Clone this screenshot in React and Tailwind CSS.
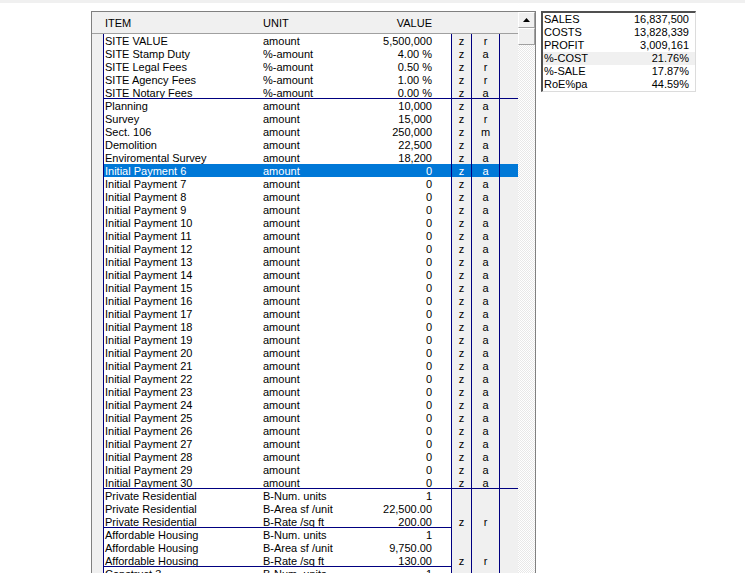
import React from 'react';

const items = [
  ['SITE VALUE', 'amount', '5,500,000', 'z', 'r'],
  ['SITE Stamp Duty', '%-amount', '4.00 %', 'z', 'a'],
  ['SITE Legal Fees', '%-amount', '0.50 %', 'z', 'r'],
  ['SITE Agency Fees', '%-amount', '1.00 %', 'z', 'r'],
  ['SITE Notary Fees', '%-amount', '0.00 %', 'z', 'a', 'full'],
  ['Planning', 'amount', '10,000', 'z', 'a'],
  ['Survey', 'amount', '15,000', 'z', 'r'],
  ['Sect. 106', 'amount', '250,000', 'z', 'm'],
  ['Demolition', 'amount', '22,500', 'z', 'a'],
  ['Enviromental Survey', 'amount', '18,200', 'z', 'a'],
];

for (let i = 6; i <= 30; i++) {
  items.push([`Initial Payment ${i}`, 'amount', '0', 'z', 'a', i === 30 ? 'full' : null, i === 6]);
}

items.push(
  ['Private Residential', 'B-Num. units', '1', '', ''],
  ['Private Residential', 'B-Area sf /unit', '22,500.00', '', ''],
  ['Private Residential', 'B-Rate /sq ft', '200.00', 'z', 'r', 'part'],
  ['Affordable Housing', 'B-Num. units', '1', '', ''],
  ['Affordable Housing', 'B-Area sf /unit', '9,750.00', '', ''],
  ['Affordable Housing', 'B-Rate /sq ft', '130.00', 'z', 'r', 'part'],
  ['Construct 3', 'B-Num. units', '1', '', ''],
  ['Construct 3', 'B-Area sf /unit', '0.00', '', ''],
);

const summary = [
  ['SALES', '16,837,500'],
  ['COSTS', '13,828,339'],
  ['PROFIT', '3,009,161'],
  ['%-COST', '21.76%', true],
  ['%-SALE', '17.87%'],
  ['RoE%pa', '44.59%'],
];

function Row({ item, unit, value, z, r, line, sel }) {
  const part = line === 'part' ? 'border-b border-[#000080]' : '';
  const side = sel ? 'bg-[#0078d7]' : 'bg-[#f0f0f0]';
  return (
    <div className="flex h-[13px]">
      <div className="w-[12px] shrink-0 bg-[#f0f0f0] border-r border-[#000080]" />
      <div className={`flex flex-1 ${line === 'full' ? 'border-b border-[#000080]' : ''} ${sel ? 'bg-[#0078d7] text-white' : 'text-black'}`}>
        <div className={`w-[159px] shrink-0 pl-[1px] pt-[1px] whitespace-nowrap overflow-hidden ${part}`}>{item}</div>
        <div className={`w-[110px] shrink-0 pt-[1px] whitespace-nowrap overflow-hidden ${part}`}>{unit}</div>
        <div className={`w-[78px] shrink-0 pr-[19px] pt-[1px] text-right whitespace-nowrap ${part}`}>{value}</div>
        <div className={`w-[20px] shrink-0 pt-[1px] text-center border-l border-[#000080] ${side}`}>{z}</div>
        <div className={`w-[28px] shrink-0 pt-[1px] text-center border-l border-[#000080] ${side}`}>{r}</div>
        <div className={`w-[19px] shrink-0 border-l border-[#000080] ${side}`} />
      </div>
    </div>
  );
}

export default function App() {
  return (
    <div className="h-[573px] overflow-hidden bg-white text-[11px] leading-[13px] text-black font-['Liberation_Sans',Arial,sans-serif]">
      <div className="h-[3px] bg-[#f0f0f0]" />
      <div className="flex items-start pl-[91px] pt-[8px]">
        {/* grid */}
        <div className="flex w-[445px] shrink-0 border border-b-0 border-[#808080]">
          <div className="flex flex-col w-[426px]">
            <div className="flex h-[22px] items-center pt-[1px] bg-[#f0f0f0] border-b border-[#a0a0a0]">
              <div className="w-[171px] pl-[13px]">ITEM</div>
              <div className="w-[110px]">UNIT</div>
              <div className="w-[78px] pr-[19px] text-right">VALUE</div>
            </div>
            {items.map((it, i) => (
              <Row key={i} item={it[0]} unit={it[1]} value={it[2]} z={it[3]} r={it[4]} line={it[5]} sel={it[6]} />
            ))}
          </div>
          {/* scrollbar */}
          <div className="flex flex-col w-[17px] shrink-0">
            <div className="h-[16px] flex items-center justify-center bg-[#f0f0f0] border-t border-l border-white border-r border-b border-r-[#a0a0a0] border-b-[#a0a0a0]">
              <svg width="7" height="4" viewBox="0 0 7 4">
                <polygon points="3.5,0 7,4 0,4" fill="#000" />
              </svg>
            </div>
            <div className="h-[17px] bg-[#f0f0f0] border-t border-l border-white border-r border-b border-r-[#a0a0a0] border-b-[#a0a0a0]" />
            <div className="flex-1 bg-[image:repeating-conic-gradient(#e8e8e8_0_25%,#ffffff_0_50%)] bg-[length:2px_2px]" />
          </div>
        </div>

        {/* summary */}
        <div className="ml-[5px] w-[155px] shrink-0 border-t-2 border-l-2 border-t-[#505050] border-l-[#505050] border-r border-b border-r-[#dcdcdc] border-b-[#dcdcdc] bg-white">
          {summary.map(([k, v, hl]) => (
            <div key={k} className={`flex justify-between h-[13px] pl-[1px] pr-[6px] ${hl ? 'bg-[#f0f0f0]' : ''}`}>
              <span>{k}</span>
              <span>{v}</span>
            </div>
          ))}
        </div>
      </div>
    </div>
  );
}
